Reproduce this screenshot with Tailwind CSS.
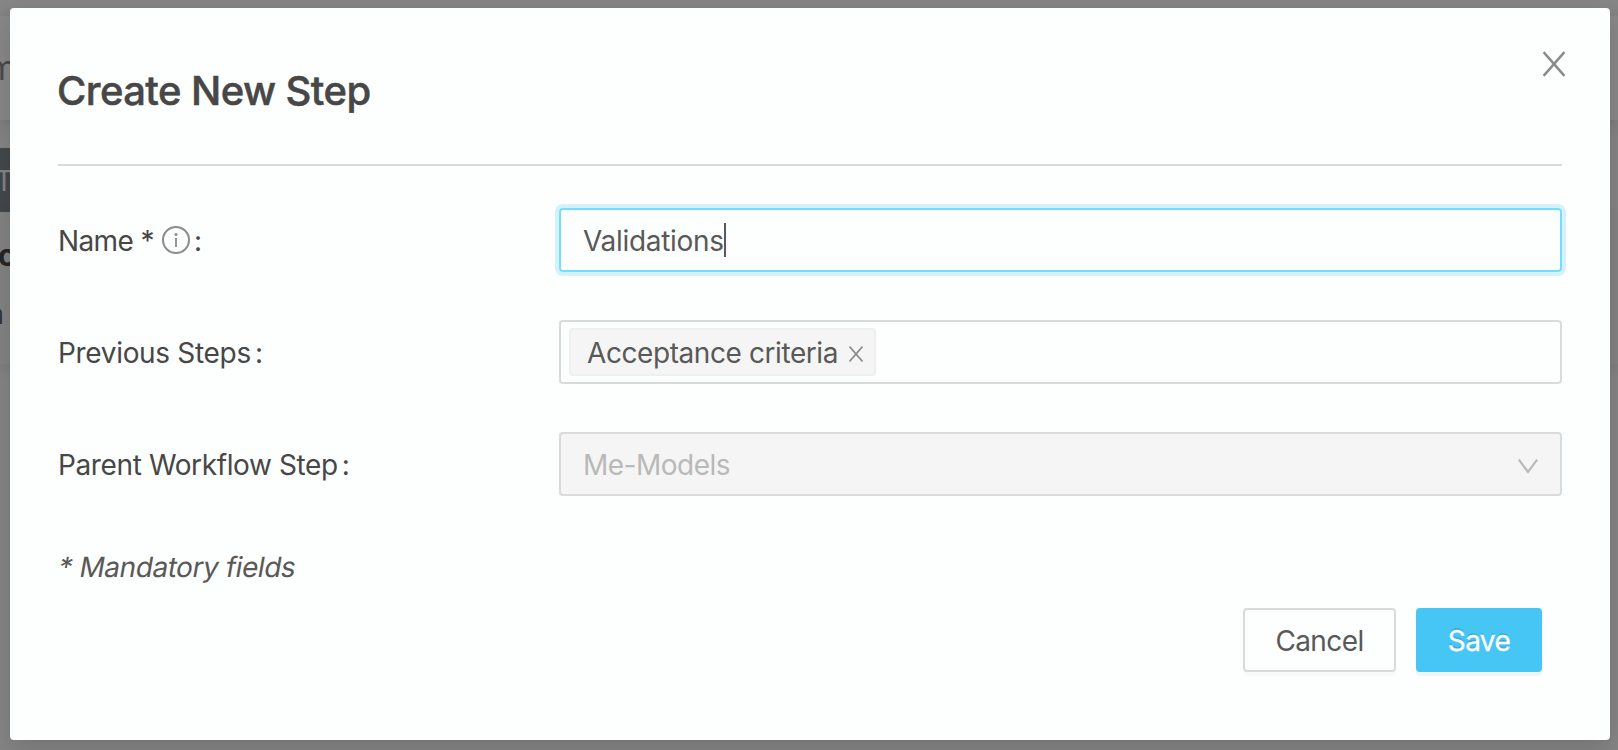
<!DOCTYPE html>
<html lang="en">
<head>
<meta charset="utf-8">
<title>Create New Step</title>
<script src="https://cdn.jsdelivr.net/npm/@tailwindcss/browser@4"></script>
</head>
<body class="relative h-[750px] w-[1618px] overflow-hidden bg-[#858585] font-['Inter',sans-serif] text-[28px] leading-[42px] text-[#595959]">
  <div class="absolute inset-0 flex flex-col overflow-hidden" aria-hidden="true">
    <div class="h-4 shrink-0 bg-[#868686]"></div>
    <div class="h-[104px] shrink-0 bg-[#888888] pt-[31px] shadow-[0_4px_16px_rgba(0,0,0,0.12)]"><span class="-ml-[13px] text-[34px] text-[#4a4a4a]">m</span></div>
    <div class="mt-7 h-16 w-8 shrink-0 bg-[#43484b] pt-3"><span class="-ml-[5px] text-[#858585]">T</span></div>
    <div class="h-[152px] shrink-0 bg-[#838383] pt-[22px] shadow-[0_4px_12px_rgba(0,0,0,0.08)]">
      <div class="-ml-0.5 text-[30px] font-bold text-[#262626]">c</div>
      <div class="-ml-[12.5px] mt-[17px] text-[#363636]">n</div>
    </div>
  </div>

  <main class="relative ml-2.5 mt-2 flex h-[732px] w-[1600px] flex-col rounded-[4px] bg-[#fdfefe] px-12 shadow-[0_8px_24px_rgba(0,0,0,0.15)]">
    <button class="absolute right-[44px] top-[43px] text-[#8b8b8b]" aria-label="Close">
      <svg class="block h-[26px] w-6" viewBox="0 0 24 26" fill="none" stroke="currentColor" stroke-width="2.5"><path d="M1.6 1.2 L22.4 24.8 M22.4 1.2 L1.6 24.8"/></svg>
    </button>
    <header class="flex h-[158px] shrink-0 items-center border-b-2 border-[#d9dada] pt-[9px]">
      <h1 class="-ml-px text-[40px] font-medium leading-[60px] tracking-[-0.58px] text-[#474747] [-webkit-text-stroke:0.5px_#474747]">Create New Step</h1>
    </header>

    <form class="mt-[42px] flex flex-col gap-12 text-[#474747]">
      <div class="flex h-16 items-center">
        <label class="flex w-[501px] items-center"><span class="pt-0.5 tracking-[-0.6px]">Name *</span>
          <svg class="ml-2 h-7 w-7" viewBox="0 0 28 28" fill="none" stroke="#8b8b8b"><circle cx="14" cy="14" r="13" stroke-width="2"/><path d="M14 12v9" stroke-width="1.8"/><circle cx="14" cy="8.5" r="1.5" fill="#8b8b8b" stroke="none"/></svg>
          <span class="ml-1 pt-0.5">:</span></label>
        <div class="flex h-16 w-[1003px] items-center rounded-[4px] border-2 border-[#6fdfff] px-[22px] text-[#595959] shadow-[0_0_0_4px_#d7f1fb]"><span class="pt-0.5 tracking-[-0.3px]">Validations</span><i class="h-[34px] w-0.5 bg-[#595959]"></i></div>
      </div>
      <div class="flex h-16 items-center">
        <label class="flex w-[501px] items-center pt-0.5"><span class="tracking-[-0.32px]">Previous Steps</span><span class="ml-1">:</span></label>
        <div class="flex h-16 w-[1003px] items-center rounded-[4px] border-2 border-[#d9dada] px-2 text-[#595959]">
          <div class="flex h-12 w-[307px] items-center rounded-[4px] border-2 border-[#efefef] bg-[#f5f5f5] pl-4 pt-0.5"><span class="tracking-[-0.42px]">Acceptance criteria</span>
            <svg class="ml-auto mr-[11px] mt-0.5 h-4 w-3.5" viewBox="0 0 14 16" fill="none" stroke="#8b8b8b" stroke-width="1.6"><path d="M.6.6 13.4 15.4M13.4.6.6 15.4"/></svg></div>
        </div>
      </div>
      <div class="flex h-16 items-center">
        <label class="flex w-[501px] items-center pt-0.5"><span class="tracking-[-0.38px]">Parent Workflow Step</span><span class="ml-1">:</span></label>
        <div class="flex h-16 w-[1003px] items-center justify-between rounded-[4px] border-2 border-[#d9dada] bg-[#f5f5f5] px-[22px] pt-0.5 text-[#b9b9b9]"><span class="tracking-[-0.5px]">Me-Models</span>
          <svg class="mt-0.5 h-[15px] w-5" viewBox="0 0 20 15" fill="none" stroke="#b9b9b9" stroke-width="2.2"><path d="M.8.6 10 13 19.2.6"/></svg></div>
      </div>
    </form>
    <p class="mt-[50px] h-[42px]"><span class="ml-px inline-block -skew-x-[10deg] tracking-[-0.45px]">* Mandatory fields</span></p>
    <footer class="mt-5 flex justify-end gap-5 pr-5">
      <button class="h-16 w-[153px] rounded-[4px] border-2 border-[#d9dada] pt-0.5 tracking-[-0.6px] shadow-[0_4px_0_rgba(0,0,0,0.015)]">Cancel</button>
      <button class="h-16 w-[126px] rounded-[4px] bg-[#45c6f5] pt-0.5 tracking-[-0.6px] text-white shadow-[0_4px_0_rgba(0,0,0,0.045)] [-webkit-text-stroke:0.3px_white] [text-shadow:0_-2px_0_rgba(0,0,0,0.12)]">Save</button>
    </footer>
  </main>
</body>
</html>
